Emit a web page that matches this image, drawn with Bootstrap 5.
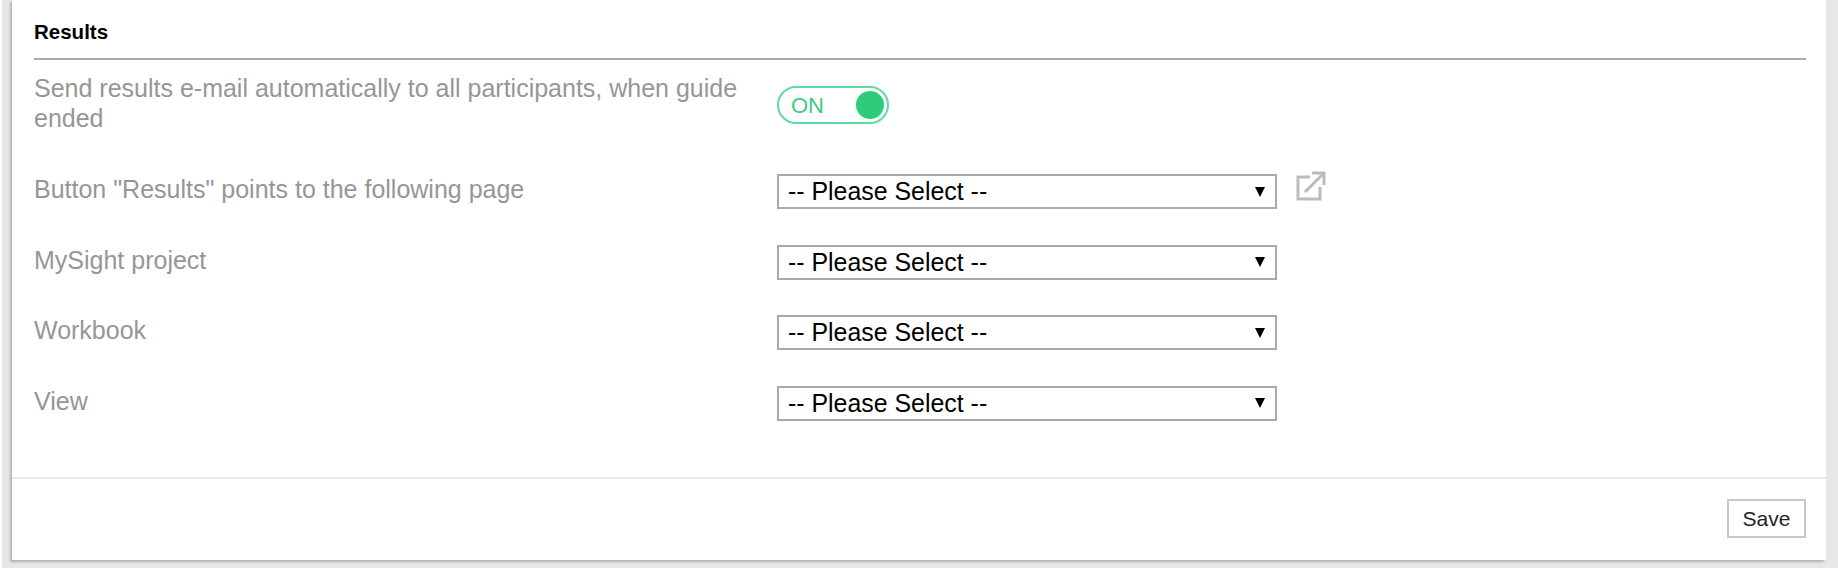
<!DOCTYPE html>
<html lang="en">
<head>
    <meta charset="UTF-8">
    <meta name="viewport" content="width=device-width, initial-scale=1.0">
    <title>Results</title>
    <link href="https://cdn.jsdelivr.net/npm/bootstrap@5.3.0/dist/css/bootstrap.min.css" rel="stylesheet">
    <style>
        body {
            background: #e6e7e8;
            font-family: "Liberation Sans", Arial, sans-serif;
            border-left: 2px solid #fff;
            padding: 0 12px 8px 10px;
            height: 568px;
            overflow: hidden;
        }
        .panel-box {
            height: 560px;
            background: #fff;
            box-shadow: -2px 2px 2px #b4b5b7;
        }
        .panel-body { padding: 19px 20px 0 22px; height: 477px; }
        .panel-foot { height: 83px; border-top: 2px solid #e8e8e8; padding: 20px 20px 0 0; }
        .section-title { font-size: 20.5px; font-weight: 700; color: #000; height: 41px; margin: 0; line-height: 26px; border-bottom: 2px solid #a9a9a9; }
        .opt-label { width: 743px; flex: none; font-size: 25px; line-height: 29.5px; color: #969696; padding-right: 30px; padding-top: 1px; }
        .opt-row { height: 70.6px; }
        .toggle-row { height: 114px; padding-top: 13px; }
        .pick {
            width: 500px; height: 35px; border: 2px solid #a9a9a9; background: #fff;
            color: #000; font-size: 24.9px; line-height: 31px; padding: 0 9px;
        }
        .pick-arrow { width: 0; height: 0; border-left: 5px solid transparent; border-right: 5px solid transparent; border-top: 10px solid #000; margin-right: 1px; }
        .toggle-on {
            width: 112px; height: 38px; margin-top: 13px; border: 2px solid #5fdb9f; border-radius: 19px;
            color: #40c987; font-size: 22px; padding: 0 3px 0 12px;
        }
        .toggle-dot { width: 28px; height: 28px; border-radius: 50%; background: #2ecc7a; }
        .link-out { margin-left: 19px; margin-top: -3px; }
        .save-btn {
            width: 79px; height: 39px; border: 2px solid #c8c8c8; border-radius: 0; background: #fff;
            color: #222; font-size: 21px; padding: 0; line-height: 33px;
        }
    </style>
</head>
<body>
    <div class="panel-box d-flex flex-column">
        <div class="panel-body">
            <h6 class="section-title">Results</h6>
            <div class="d-flex align-items-start toggle-row">
                <div class="opt-label">Send results e-mail automatically to all participants, when guide ended</div>
                <div class="toggle-on d-flex align-items-center justify-content-between">
                    <span>ON</span><span class="toggle-dot"></span>
                </div>
            </div>
            <div class="d-flex opt-row">
                <div class="opt-label">Button "Results" points to the following page</div>
                <div class="pick d-flex align-items-center justify-content-between"><span>-- Please Select --</span><span class="pick-arrow"></span></div>
                <svg class="link-out" width="30" height="30" viewBox="0 0 30 30" fill="none" stroke="#b9bbc0" stroke-width="3">
                    <path d="M14 6H2v22h22V16"/>
                    <path d="M9 21L27 3"/>
                    <path d="M16 2h12v12"/>
                </svg>
            </div>
            <div class="d-flex opt-row">
                <div class="opt-label">MySight project</div>
                <div class="pick d-flex align-items-center justify-content-between"><span>-- Please Select --</span><span class="pick-arrow"></span></div>
            </div>
            <div class="d-flex opt-row">
                <div class="opt-label">Workbook</div>
                <div class="pick d-flex align-items-center justify-content-between"><span>-- Please Select --</span><span class="pick-arrow"></span></div>
            </div>
            <div class="d-flex opt-row">
                <div class="opt-label">View</div>
                <div class="pick d-flex align-items-center justify-content-between"><span>-- Please Select --</span><span class="pick-arrow"></span></div>
            </div>
        </div>
        <div class="panel-foot d-flex justify-content-end align-items-start">
            <button type="button" class="btn save-btn">Save</button>
        </div>
    </div>
</body>
</html>
